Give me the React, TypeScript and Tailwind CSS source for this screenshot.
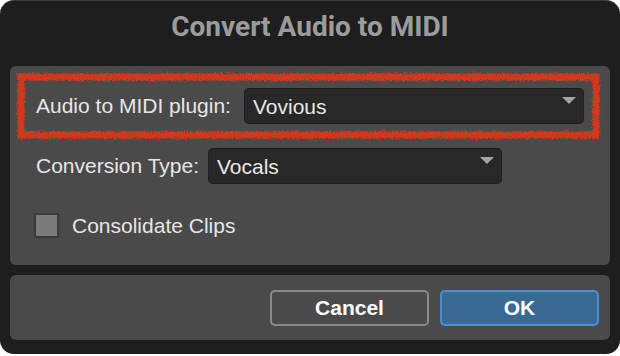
import React from "react";

function Select({ value, width }: { value: string; width: string }) {
  return (
    <div
      className={`${width} flex h-[36px] items-center justify-between rounded-[5px] border border-[#1f1f1f] border-t-[#1a1a1a] bg-[#282828] pl-[8px] pr-[7px]`}
    >
      <span className="text-[21px] leading-none text-[#e8e8e8]">{value}</span>
      <svg width="14" height="8" viewBox="0 0 14 8" className="-mt-[10px]">
        <path d="M0 0 H14 L7 7 Z" fill="#a3a3a3" />
      </svg>
    </div>
  );
}

export default function App() {
  return (
    <div className="h-[356px] w-[620px] bg-white" style={{ fontFamily: '"Liberation Sans", Arial, sans-serif' }}>
      <div className="flex h-[354px] w-[620px] flex-col rounded-[14px] border-t border-t-[#3a3a3a] bg-[#1e1e1e] px-[10px]">
        <div className="flex h-[65px] justify-center pt-[10px]">
          <h1 className="font-['Roboto',sans-serif] text-[28px] font-bold leading-[32px] text-[#9c9c9c]">
            Convert Audio to MIDI
          </h1>
        </div>

        <div className="relative flex h-[199px] flex-col rounded-[6px] bg-[#4a4a4a] pl-[26px] pt-[22px]">
          <div className="flex items-center">
            <span className="w-[208px] text-[21px] text-[#e6e6e6]">Audio to MIDI plugin:</span>
            <Select value="Vovious" width="w-[340px]" />
          </div>
          <div className="mt-[24px] flex items-center">
            <span className="w-[172px] text-[21px] text-[#e6e6e6]">Conversion Type:</span>
            <Select value="Vocals" width="w-[294px]" />
          </div>
          <div className="mt-[26px] flex items-center">
            <div className="ml-[-2px] h-[25px] w-[25px] border-2 border-[#3b3b3b] bg-[#7b7b7b]" />
            <span className="ml-[13px] text-[21px] text-[#e6e6e6]">Consolidate Clips</span>
          </div>

          <svg className="pointer-events-none absolute left-[4px] top-[4px]" width="592" height="74" viewBox="0 0 592 74">
            <defs>
              <filter id="rough" x="-5%" y="-20%" width="110%" height="140%">
                <feTurbulence type="fractalNoise" baseFrequency="1.4" numOctaves="3" seed="5" result="n" />
                <feDisplacementMap in="SourceGraphic" in2="n" scale="7" />
              </filter>
            </defs>
            <rect x="7" y="7" width="575" height="58" fill="none" stroke="#d2381c" strokeWidth="7" filter="url(#rough)" />
          </svg>
        </div>

        <div className="mt-[10px] flex h-[65px] items-start justify-end gap-[11px] rounded-[6px] bg-[#4a4a4a] pr-[11px] pt-[15px]">
          <button className="flex h-[36px] w-[159px] items-center justify-center rounded-[5px] border-2 border-[#8a8a8a] text-[21px] font-bold text-white">
            Cancel
          </button>
          <button className="flex h-[36px] w-[159px] items-center justify-center rounded-[5px] border-2 border-[#4b8fcf] bg-[#386a94] text-[21px] font-bold text-white">
            OK
          </button>
        </div>
      </div>
    </div>
  );
}
